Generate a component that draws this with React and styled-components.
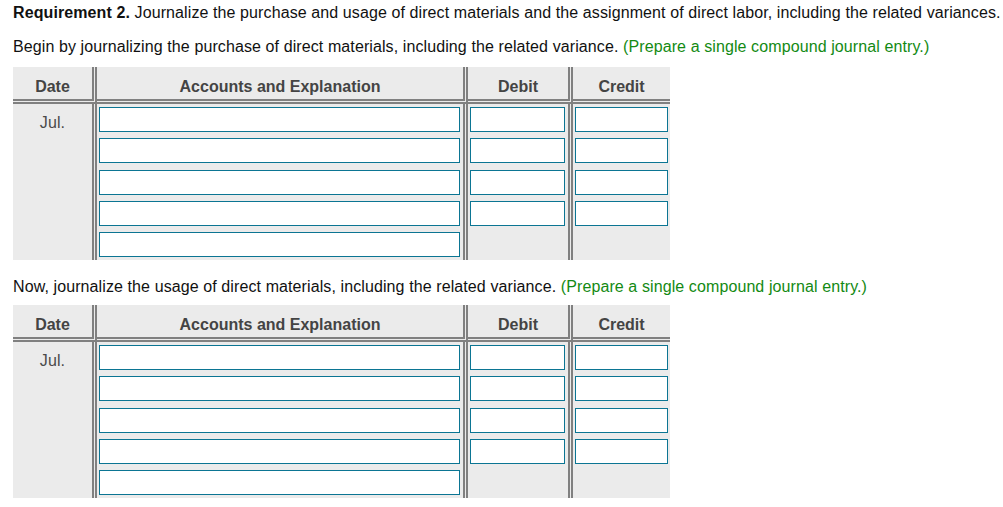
import React from 'react';
import styled, { createGlobalStyle } from 'styled-components';

const GlobalStyle = createGlobalStyle`
  body {
    margin: 0;
    background: #ffffff;
    font-family: 'Liberation Sans', Arial, sans-serif;
  }
`;

const Page = styled.div`
  padding: 3px 13px 0;
  color: #111;
  font-size: 16px;
  letter-spacing: 0.1px;
`;

const Line = styled.p`
  margin: 0 0 ${p => p.gap}px;
  padding-top: ${p => p.shift || 0}px;
  line-height: 20px;
  white-space: nowrap;
`;

const Hint = styled.span`
  color: #138a13;
`;

const Journal = styled.div`
  display: grid;
  grid-template-columns: 84px 371px 105px 97px;
  width: 657px;
  background: #ebebeb;
  margin-bottom: ${p => p.gap || 0}px;
`;

const HeadCell = styled.div`
  box-sizing: border-box;
  height: 37px;
  padding-top: 7px;
  line-height: 25px;
  text-align: center;
  font-weight: bold;
  color: #444;
  letter-spacing: 0;
  border-bottom: 5px double #808080;
  border-right: ${p => (p.last ? 'none' : '5px double #808080')};
`;

const BodyCell = styled.div`
  box-sizing: border-box;
  height: 156px;
  display: flex;
  flex-direction: column;
  gap: 6.25px;
  padding: 3px ${p => (p.last ? 2 : 3)}px 3px 2px;
  border-right: ${p => (p.last ? 'none' : '5px double #808080')};
`;

const DateCell = styled(BodyCell)`
  padding: 9px 0 0;
  line-height: 20px;
  text-align: center;
  color: #4a4a4a;
`;

const Field = styled.input`
  box-sizing: border-box;
  display: block;
  width: 100%;
  height: 25px;
  margin: 0;
  padding: 0 4px;
  border: 1px solid #0b7593;
  border-radius: 0;
  background: #ffffff;
  font: inherit;
  outline: none;
`;

const accountRows = [0, 1, 2, 3, 4];
const amountRows = [0, 1, 2, 3];

const JournalTable = ({ gap }) => (
  <Journal gap={gap}>
    <HeadCell>Date</HeadCell>
    <HeadCell>Accounts and Explanation</HeadCell>
    <HeadCell>Debit</HeadCell>
    <HeadCell last>Credit</HeadCell>
    <DateCell>Jul.</DateCell>
    <BodyCell>
      {accountRows.map(i => (
        <Field key={i} type="text" />
      ))}
    </BodyCell>
    <BodyCell>
      {amountRows.map(i => (
        <Field key={i} type="text" />
      ))}
    </BodyCell>
    <BodyCell last>
      {amountRows.map(i => (
        <Field key={i} type="text" />
      ))}
    </BodyCell>
  </Journal>
);

const App = () => (
  <>
    <GlobalStyle />
    <Page>
      <Line gap={14}>
        <b>Requirement 2.</b> Journalize the purchase and usage of direct materials and the
        assignment of direct labor, including the related variances.
      </Line>
      <Line gap={10}>
        Begin by journalizing the purchase of direct materials, including the related variance.{' '}
        <Hint>(Prepare a single compound journal entry.)</Hint>
      </Line>
      <JournalTable gap={16} />
      <Line gap={8} shift={1}>
        Now, journalize the usage of direct materials, including the related variance.{' '}
        <Hint>(Prepare a single compound journal entry.)</Hint>
      </Line>
      <JournalTable />
    </Page>
  </>
);

export default App;
